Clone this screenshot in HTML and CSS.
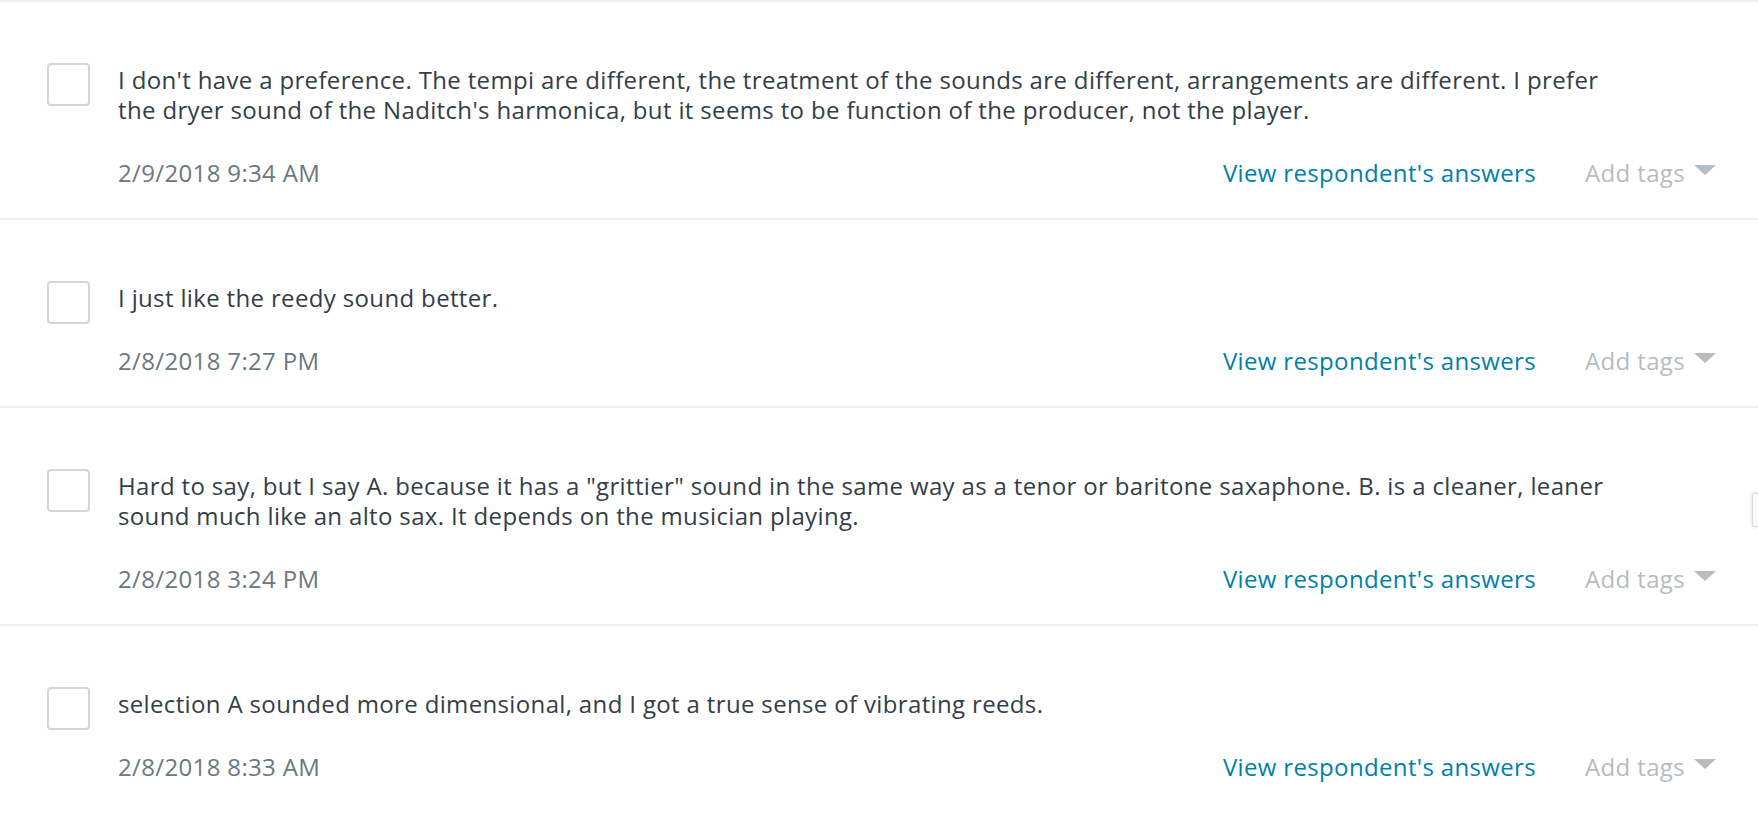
FILE: index.html
```html
<!DOCTYPE html>
<html lang="en">
<head>
  <meta charset="UTF-8">
  <meta name="viewport" content="width=device-width, initial-scale=1.0">
  <title>Responses</title>
  <link rel="stylesheet" href="styles.css">
</head>
<body>
  <div class="responses">

    <div class="response">
      <span class="check"></span>
      <div class="body">
        <p class="answer">I don't have a preference. The tempi are different, the treatment of the sounds are different, arrangements are different. I prefer the dryer sound of the Naditch's harmonica, but it seems to be function of the producer, not the player.</p>
        <div class="meta">
          <span class="date">2/9/2018 9:34 AM</span>
          <div class="actions">
            <a class="view-link" href="#">View respondent's answers</a>
            <span class="tags">Add tags <span class="caret"></span></span>
          </div>
        </div>
      </div>
    </div>

    <div class="response">
      <span class="check"></span>
      <div class="body">
        <p class="answer">I just like the reedy sound better.</p>
        <div class="meta">
          <span class="date">2/8/2018 7:27 PM</span>
          <div class="actions">
            <a class="view-link" href="#">View respondent's answers</a>
            <span class="tags">Add tags <span class="caret"></span></span>
          </div>
        </div>
      </div>
    </div>

    <div class="response">
      <span class="check"></span>
      <div class="body">
        <p class="answer">Hard to say, but I say A. because it has a "grittier" sound in the same way as a tenor or baritone saxaphone. B. is a cleaner, leaner sound much like an alto sax. It depends on the musician playing.</p>
        <div class="meta">
          <span class="date">2/8/2018 3:24 PM</span>
          <div class="actions">
            <a class="view-link" href="#">View respondent's answers</a>
            <span class="tags">Add tags <span class="caret"></span></span>
          </div>
        </div>
      </div>
    </div>

    <div class="response">
      <span class="check"></span>
      <div class="body">
        <p class="answer">selection A sounded more dimensional, and I got a true sense of vibrating reeds.</p>
        <div class="meta">
          <span class="date">2/8/2018 8:33 AM</span>
          <div class="actions">
            <a class="view-link" href="#">View respondent's answers</a>
            <span class="tags">Add tags <span class="caret"></span></span>
          </div>
        </div>
      </div>
    </div>

  </div>

  <div class="side-tab"></div>
</body>
</html>
```

FILE: styles.css
```css
/* General */
body {
  margin: 0;
  padding: 0;
  font-family: 'Open Sans', sans-serif;
  letter-spacing: 0.35px;
  background-color: #ffffff;
  color: #333e48;
  overflow: hidden;
}

.responses {
  border-top: 2px solid #ededed;
}

.response {
  display: flex;
  align-items: flex-start;
  gap: 28px;
  padding: 61px 42px 30px 47px;
  border-bottom: 2px solid #ededed;
}

.response:last-child {
  border-bottom: none;
}

.check {
  flex: none;
  width: 39px;
  height: 39px;
  border: 2px solid #d3d5d7;
  border-radius: 4px;
  background: #ffffff;
}

.body {
  flex: 1;
}

.answer {
  margin: 2px 0 0;
  max-width: 1500px;
  font-size: 24px;
  line-height: 30px;
}

.meta {
  display: flex;
  justify-content: space-between;
  align-items: center;
  margin-top: 33px;
  font-size: 24px;
  line-height: 30px;
}

.date {
  color: #6b7880;
}

.actions {
  display: flex;
  align-items: center;
  gap: 49px;
}

.view-link {
  color: #007faa;
  text-decoration: none;
}

.tags {
  display: flex;
  align-items: center;
  gap: 9px;
  color: #b6bcc0;
}

.caret {
  width: 0;
  height: 0;
  border-left: 11px solid transparent;
  border-right: 11px solid transparent;
  border-top: 10px solid #b6bcc0;
  margin-top: -6px;
}

/* small tab peeking in at the right edge */
.side-tab {
  position: absolute;
  right: -6px;
  top: 493px;
  width: 10px;
  height: 32px;
  border: 1px solid #dcdcdc;
  border-radius: 2px;
  background: #fafafa;
  box-shadow: 0 0 4px rgba(0, 0, 0, 0.15);
}
```
